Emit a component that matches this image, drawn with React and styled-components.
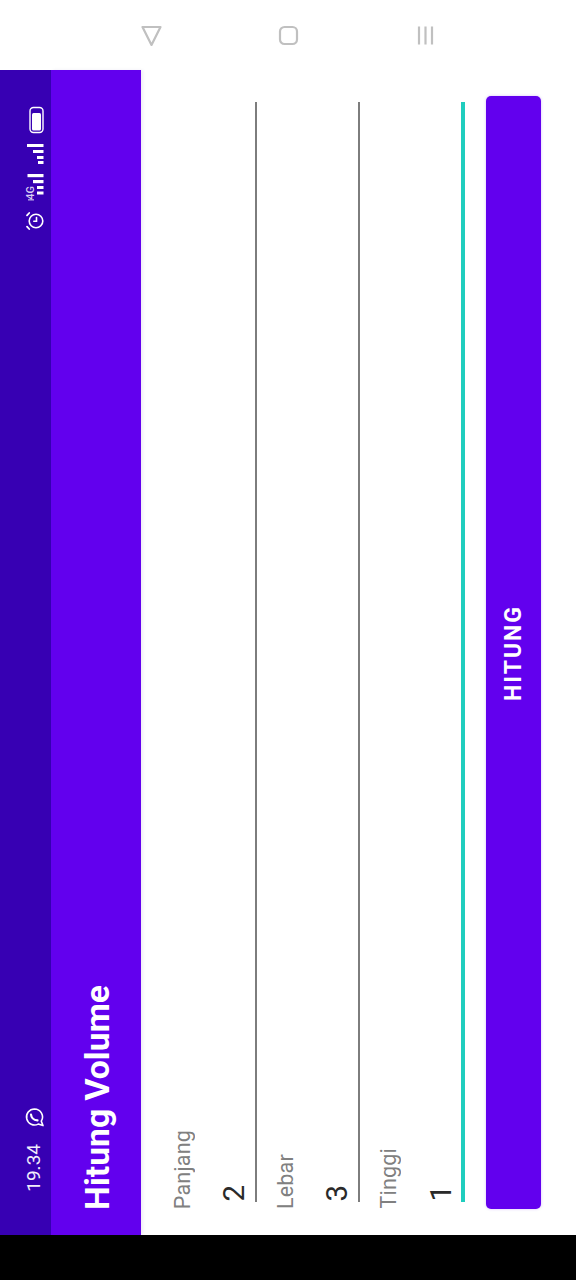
import React from "react";
import styled, { createGlobalStyle } from "styled-components";

const Global = createGlobalStyle`
  html, body { margin: 0; padding: 0; background: #000; }
  body { font-family: Roboto, "Liberation Sans", sans-serif; }
`;

const Page = styled.div`
  width: 576px;
  height: 1280px;
  overflow: hidden;
  display: flex;
  flex-direction: column;
  background: #000;
`;

const Screen = styled.div`
  height: 1235px;
  display: flex;
  flex-direction: column;
  background: #fff;
`;

const NavBar = styled.nav`
  height: 70px;
  box-sizing: border-box;
  padding: 25px 140px 0 141px;
  display: flex;
  justify-content: space-between;
  align-items: flex-start;
  background: #fff;
`;

const NavIcon = styled.svg`
  width: 21px;
  height: 21px;
  fill: none;
  stroke: #c0c0c0;
  stroke-width: 2.2;
`;

const Body = styled.div`
  flex: 1;
  display: flex;
  min-height: 0;
`;

const SideText = styled.span`
  writing-mode: vertical-rl;
  transform: rotate(180deg);
  white-space: nowrap;
`;

const StatusBar = styled.div`
  width: 51px;
  flex-shrink: 0;
  box-sizing: border-box;
  padding: 36px 7px 43px 0;
  background: #3700b3;
  display: flex;
  flex-direction: column;
  justify-content: space-between;
  align-items: flex-end;
  color: #fff;
`;

const StatusGroup = styled.div`
  display: flex;
  flex-direction: column;
  align-items: flex-end;
  gap: ${(p) => p.$gap}px;
`;

const Glyph = styled.svg`
  display: block;
  width: ${(p) => p.$w}px;
  height: ${(p) => p.$h}px;
  fill: none;
  stroke: #fff;
  overflow: visible;
`;

const NetworkSlot = styled.div`
  position: relative;
  width: 17px;
  height: 28px;
`;

const NetworkLabel = styled(SideText)`
  position: absolute;
  left: 0;
  top: 12px;
  font-size: 11px;
  line-height: 8px;
  font-weight: 500;
  color: #d9cdf2;
`;

const Time = styled(SideText)`
  font-size: 19px;
  line-height: 20px;
  color: #f1ecfb;
`;

const AppBar = styled.header`
  width: 90px;
  flex-shrink: 0;
  box-sizing: border-box;
  padding: 0 0 25px 30px;
  background: #6200ee;
  box-shadow: 2px 0 3px rgba(60, 0, 140, 0.08);
  z-index: 1;
  display: flex;
  align-items: flex-end;
`;

const Title = styled(SideText)`
  font-size: 33.7px;
  line-height: 34px;
  font-weight: 700;
  color: #fff;
`;

const Form = styled.main`
  flex: 1;
  min-width: 0;
  box-sizing: border-box;
  padding: 26px 35px 26px 13px;
  display: flex;
  background: #fff;
`;

const Fields = styled.div`
  display: flex;
  margin-right: 21px;
`;

const Field = styled.div`
  width: ${(p) => p.$w}px;
  box-sizing: border-box;
  padding-left: 12px;
  display: flex;
  align-items: stretch;
`;

const Label = styled(SideText)`
  align-self: flex-end;
  width: 34px;
  font-size: 21.5px;
  line-height: 34px;
  letter-spacing: 0.2px;
  color: #808080;
`;

const InputLine = styled.div`
  flex: 1;
  margin: 6px 0 7px;
  box-sizing: border-box;
  border-right: ${(p) => (p.$focused ? "4px solid #1fcdbe" : "2px solid #7d7d7d")};
  display: flex;
  flex-direction: column;
  justify-content: flex-end;
  align-items: flex-end;
  padding-right: ${(p) => (p.$focused ? "5px" : "6px")};
`;

const Value = styled(SideText)`
  font-size: 29.5px;
  line-height: 30px;
  color: #2a2a2a;
`;

const Button = styled.button`
  width: 55px;
  flex-shrink: 0;
  border: 0;
  padding: 0;
  border-radius: 5px;
  background: #6200ee;
  box-shadow: 0 0 3px rgba(98, 0, 238, 0.25);
  color: #fff;
  font-family: inherit;
  display: flex;
  align-items: center;
  justify-content: center;
`;

const ButtonText = styled(SideText)`
  font-size: 23px;
  line-height: 26px;
  font-weight: 700;
  letter-spacing: 2px;
`;

const Battery = () => (
  <Glyph $w={15} $h={28} viewBox="0 0 15 28">
    <rect x="1" y="1.5" width="13" height="25" rx="3.5" strokeWidth="1.4" />
    <rect x="3" y="7" width="9" height="17.5" rx="1.5" fill="#fff" stroke="none" />
  </Glyph>
);

const SignalSmall = () => (
  <Glyph $w={17} $h={20} viewBox="0 0 17 20">
    <g fill="#fff" stroke="none">
      <rect x="0" y="0" width="16.5" height="3" />
      <rect x="6" y="6" width="10.5" height="3" />
      <rect x="10" y="12" width="6.5" height="3" />
      <rect x="11" y="17" width="5.5" height="3" />
    </g>
  </Glyph>
);

const SignalFull = () => (
  <Glyph $w={17} $h={22} viewBox="0 0 17 22">
    <g fill="#fff" stroke="none">
      <rect x="0.5" y="0" width="16" height="3.2" />
      <rect x="6" y="6" width="10.5" height="3.2" />
      <rect x="10" y="12" width="6.5" height="3" />
      <rect x="10" y="17.5" width="6.5" height="3" />
      <rect x="1" y="25" width="6" height="1.6" opacity="0.55" />
    </g>
  </Glyph>
);

const Alarm = () => (
  <Glyph $w={18} $h={18} viewBox="0 0 18 18" strokeWidth="1.6" strokeLinecap="round">
    <circle cx="10" cy="9" r="6.8" />
    <path d="M10.5 5.5v3.8H7.8" />
    <path d="M1 3.4 3.2 1M1 14.6l2.2 2.4" strokeWidth="1.8" />
  </Glyph>
);

const Whatsapp = () => (
  <Glyph $w={19} $h={19} viewBox="0 0 19 19" strokeWidth="1.6" strokeLinejoin="round">
    <path d="M9.5 1A8 8 0 1 0 13.2 16.1L18 17.6 16.3 13.2A8 8 0 0 0 9.5 1Z" />
    <path d="M6 6.5C6.3 9.6 8.6 12 12.5 12.4" strokeWidth="2.2" strokeLinecap="round" />
  </Glyph>
);

const fields = [
  { label: "Panjang", value: "2", width: 103 },
  { label: "Lebar", value: "3", width: 103 },
  { label: "Tinggi", value: "1", width: 105, focused: true },
];

export default function App() {
  return (
    <Page>
      <Global />
      <Screen>
        <NavBar>
          <NavIcon viewBox="0 0 21 21" strokeLinejoin="round">
            <path d="M1.5 2h18l-9 18Z" />
          </NavIcon>
          <NavIcon viewBox="0 0 21 21">
            <rect x="2" y="2" width="17" height="17" rx="4.5" />
          </NavIcon>
          <NavIcon viewBox="0 0 21 21">
            <path d="M4 1.5v18M10.5 1.5v18M17 1.5v18" />
          </NavIcon>
        </NavBar>
        <Body>
          <StatusBar>
            <StatusGroup $gap={10}>
              <Battery />
              <SignalSmall />
              <NetworkSlot>
                <SignalFull />
                <NetworkLabel>4G</NetworkLabel>
              </NetworkSlot>
              <Alarm />
            </StatusGroup>
            <StatusGroup $gap={17}>
              <Whatsapp />
              <Time>19.34</Time>
            </StatusGroup>
          </StatusBar>
          <AppBar>
            <Title>Hitung Volume</Title>
          </AppBar>
          <Form>
            <Fields>
              {fields.map((f) => (
                <Field key={f.label} $w={f.width}>
                  <Label>{f.label}</Label>
                  <InputLine $focused={f.focused}>
                    <Value>{f.value}</Value>
                  </InputLine>
                </Field>
              ))}
            </Fields>
            <Button>
              <ButtonText>HITUNG</ButtonText>
            </Button>
          </Form>
        </Body>
      </Screen>
    </Page>
  );
}
